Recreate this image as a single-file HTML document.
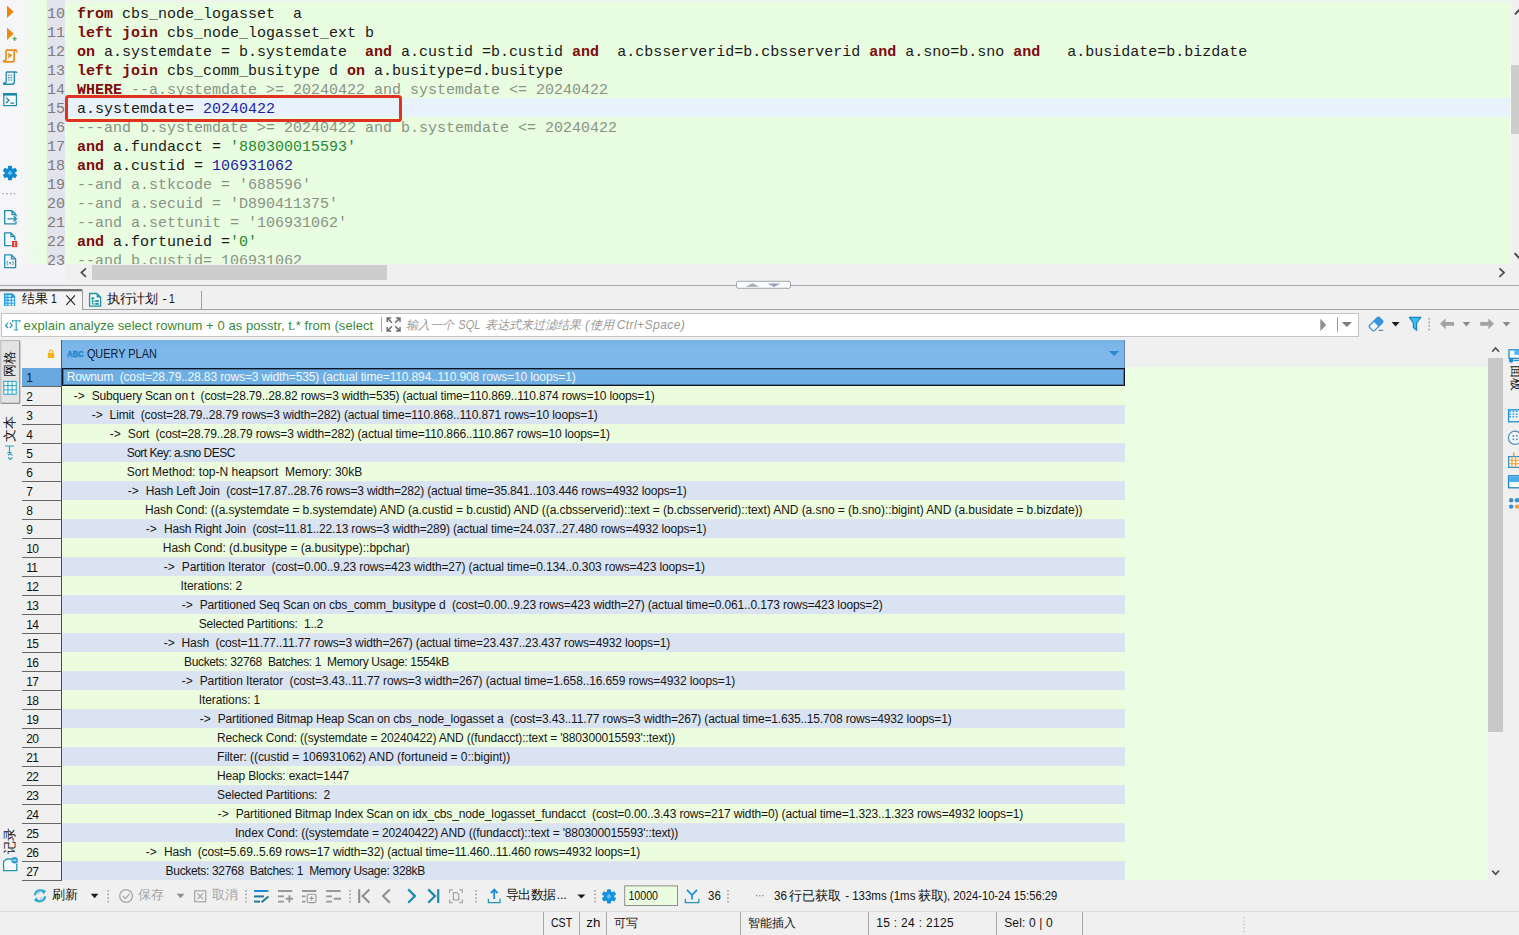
<!DOCTYPE html>
<html lang="zh">
<head>
<meta charset="utf-8">
<title>DBeaver</title>
<style>
*{box-sizing:border-box;margin:0;padding:0}
html,body{width:1519px;height:935px;overflow:hidden;background:#f0f0f0;font-family:"Liberation Sans",sans-serif;font-size:12px;color:#000}
.abs{position:absolute}
#page{position:relative;width:1519px;height:935px;overflow:hidden;background:#f0f0f0}
/* ---------- editor ---------- */
#ltool2{left:0;top:264px;width:77px;height:18px;background:#f4f4f7}
#ltool{left:0;top:0;width:47px;height:264px;background:linear-gradient(90deg,#f6f5f8 0,#f6f6f8 22px,#ecfbe6 34px,#e9fde1 47px)}
#editor{left:47px;top:3px;width:1463px;height:261px;background:#e9fde1;overflow:hidden}
#edtop{left:22px;top:0;width:1497px;height:3px;background:#eef5ec}
#gutter{left:47px;top:0;width:18px;height:264px;background:#e2e3ec}
#curline{left:65px;top:98px;width:1445px;height:19px;background:#e8f2fd}
.ln,.cl{position:absolute;height:19px;line-height:19px;font-family:"Liberation Mono",monospace;font-size:15px;white-space:pre}
.ln{left:40px;width:25px;text-align:right;color:#7d7d7d}
.cl{left:77px;color:#1a1a1a}
.cl b{color:#7d0a0a;font-weight:bold}
.cl i{color:#889386;font-style:normal}
.cl u{color:#1c1ca8;text-decoration:none}
.cl s{color:#1f8a2f;text-decoration:none}
#redbox{left:65px;top:95px;width:337px;height:27px;border:3px solid #e0321f;border-radius:3.5px}
#vsb{left:1510px;top:0px;width:9px;height:264px;background:#f0f0f0;border-left:1px solid #f7fbf5}
#vsb .th{position:absolute;left:0;top:65px;width:9px;height:69px;background:#cdcdcd}
#hsb{left:65px;top:264px;width:1454px;height:18px;background:#f0f0f0}
#hsb .th{position:absolute;left:27px;top:1px;width:295px;height:15px;background:#cdcdcd}
/* ---------- sash / tabs ---------- */
#sash{left:0;top:285px;width:1519px;height:1px;background:#a3abb5}
#tabs{left:0;top:289px;width:1519px;height:21px;border-bottom:1px solid #a0a0a0;background:#f0f0f0}
#tab1{left:0;top:289px;width:83px;height:21px;background:#f4f4f6;border-top:2px solid #6e6e6e;border-right:1px solid #9a9a9a;border-top-right-radius:2px;box-shadow:inset 0 1px 0 rgba(110,110,110,.35)}
#tab2{left:83px;top:291px;width:119px;height:18px;border-right:1px solid #a0a0a0}
.tabtx{position:absolute;font-size:13px;line-height:16px;white-space:pre;color:#111}
/* ---------- filter ---------- */
#filter{left:1px;top:313px;width:1358px;height:24px;background:#fff;border:1px solid #c4c4c4}
#ftxt{left:22px;top:318px;font-size:13px;line-height:16px;color:#3a8a3a;white-space:pre}
.fph{top:317px;font-size:12.1px;line-height:16px;color:#9a9a9a;font-style:italic;white-space:pre}
/* ---------- grid ---------- */
#gbg{left:22px;top:367px;width:1466px;height:513px;background:#ebfde3}
#gcol{left:62px;top:367px;width:1063px;height:513px;background:#ecfde0}
#ghdr{left:61px;top:340px;width:1064px;height:28px;background:linear-gradient(#77b2e7,#7eb7ea 30%,#7db6e9);border-left:1px solid #3f5f80;border-right:1px solid #5f88b4}
#ghdrt{left:87px;top:346px;font-size:12px;line-height:16px;color:#0d1b33;white-space:pre}
.r{position:absolute;left:62px;width:1063px;height:19px;overflow:hidden}
.r.o{background:linear-gradient(#e0e9f0 0,#dae3f1 1px)}
.r.e{background:#ecfddf}
.r.sel{background:#6daee4;border:1px solid #0c1622;box-shadow:inset 0 0 0 1px rgba(30,50,80,.45);color:#fff;margin-top:1px;height:18px}
.r.sel .t{top:0px;margin-left:-1px;color:#f4f8fc}
.t{position:absolute;top:2px;line-height:17px;height:17px;font-size:12px;white-space:pre;color:#161616}
#ov text{font-family:"Liberation Sans",sans-serif;white-space:pre}
#gtxt text{font-family:"Liberation Sans",sans-serif;font-size:12px;fill:#161616;white-space:pre}
#gtxt text.w{fill:#f4f8fc}
.rh{position:absolute;left:22px;width:40px;height:19px;background:#f0f0f0;border-bottom:1px solid #666;border-right:1px solid #4a4a4a;padding-left:4.2px;padding-top:2px;font-size:12px;line-height:17px;color:#111;letter-spacing:-0.7px}
.rh.hsel{background:#68a7e0;color:#0d1b33}
#rhh{left:22px;top:340px;width:40px;height:28px;background:#f3f3f3;border-right:1px solid #4a5a6a}
#gvsb{left:1488px;top:340px;width:15px;height:541px;background:#f0f0f0}
#gvsb .th{position:absolute;left:0;top:18px;width:15px;height:374px;background:#c8c8c8}
#lvt{left:0;top:340px;width:22px;height:541px;background:#f0f0f0}
#rpanel{left:1503px;top:340px;width:16px;height:571px;background:#f0f0f0}
.vtx{transform:rotate(-90deg);transform-origin:0 0;font-size:12.5px;line-height:14px;height:14px;color:#111;white-space:nowrap}
.vtx2{transform:rotate(90deg);transform-origin:0 0;font-size:12.5px;line-height:14px;height:14px;color:#111;white-space:nowrap}
/* ---------- bottom ---------- */
#btool{left:0;top:881px;width:1519px;height:30px;background:#f0f0f0}
#bline{left:0;top:911px;width:1519px;height:1px;background:#dcdcdc}
.bt{position:absolute;font-size:13px;line-height:16px;white-space:pre}
.sm{top:888px;font-size:12.4px;color:#111}
.sep{position:absolute;width:1px;background:#a8a8a8}
.st{position:absolute;top:915px;font-size:12px;line-height:16px;white-space:pre;color:#111}
</style>
</head>
<body>
<div id="page">

<!-- editor -->
<div class="abs" id="edtop"></div>
<div class="abs" id="ltool"></div>
<div class="abs" id="ltool2"></div>
<div class="abs" id="editor"></div>
<div class="abs" id="gutter"></div>
<div class="abs" id="curline"></div>
<div class="ln" style="top:5px">10</div><div class="cl" style="top:5px"><b>from</b> cbs_node_logasset  a</div>
<div class="ln" style="top:24px">11</div><div class="cl" style="top:24px"><b>left</b> <b>join</b> cbs_node_logasset_ext b</div>
<div class="ln" style="top:43px">12</div><div class="cl" style="top:43px"><b>on</b> a.systemdate = b.systemdate  <b>and</b> a.custid =b.custid <b>and</b>  a.cbsserverid=b.cbsserverid <b>and</b> a.sno=b.sno <b>and</b>   a.busidate=b.bizdate</div>
<div class="ln" style="top:62px">13</div><div class="cl" style="top:62px"><b>left</b> <b>join</b> cbs_comm_busitype d <b>on</b> a.busitype=d.busitype</div>
<div class="ln" style="top:81px">14</div><div class="cl" style="top:81px"><b>WHERE</b> <i>--a.systemdate &gt;= 20240422 and systemdate &lt;= 20240422</i></div>
<div class="ln" style="top:100px">15</div><div class="cl" style="top:100px">a.systemdate= <u>20240422</u></div>
<div class="ln" style="top:119px">16</div><div class="cl" style="top:119px"><i>---and b.systemdate &gt;= 20240422 and b.systemdate &lt;= 20240422</i></div>
<div class="ln" style="top:138px">17</div><div class="cl" style="top:138px"><b>and</b> a.fundacct = <s>'880300015593'</s></div>
<div class="ln" style="top:157px">18</div><div class="cl" style="top:157px"><b>and</b> a.custid = <u>106931062</u></div>
<div class="ln" style="top:176px">19</div><div class="cl" style="top:176px"><i>--and a.stkcode = '688596'</i></div>
<div class="ln" style="top:195px">20</div><div class="cl" style="top:195px"><i>--and a.secuid = 'D890411375'</i></div>
<div class="ln" style="top:214px">21</div><div class="cl" style="top:214px"><i>--and a.settunit = '106931062'</i></div>
<div class="ln" style="top:233px">22</div><div class="cl" style="top:233px"><b>and</b> a.fortuneid =<s>'0'</s></div>
<div class="ln" style="top:252px">23</div><div class="cl" style="top:252px"><i>--and b.custid= 106931062</i></div>
<div class="abs" id="redbox"></div>
<div class="abs" id="vsb"><div class="th"></div></div>
<div class="abs" id="hsb"><div class="th"></div></div>
<svg class="abs" style="left:0;top:0" width="22" height="282" viewBox="0 0 22 282">
 <!-- run -->
 <path d="M7 5.5 L13.6 11.8 L7 18.1 Z" fill="#f08305"/>
 <!-- run new tab -->
 <path d="M7 27.6 L13.6 33.8 L7 40 Z" fill="#ee8a10"/>
 <path d="M12.6 38.8 H16.8 M14.7 36.7 V40.9" stroke="#3f9a48" stroke-width="1.1" fill="none"/>
 <!-- run script -->
 <path d="M6 50.2 H15.6 Q16.6 50.2 16.6 51.4 V52.6 M14.2 50.2 V59.8 M6 50.2 V60.6 M3.4 61.9 H11.6 Q14.2 61.9 14.2 59.4 M3.4 61.9 Q3.4 60.4 5 60.4 H6" stroke="#e8901c" stroke-width="1.7" fill="none"/>
 <path d="M8.3 52.6 L12.3 55.6 L8.3 58.6 Z" fill="#e8901c"/>
 <!-- script doc -->
 <path d="M6.2 72 H15.8 Q16.8 72 16.8 73.1 M14.4 72 V82 M6.2 72 V82.6 M3.4 84.3 H11.8 Q14.4 84.3 14.4 81.8 M3.4 84.3 Q3.4 82.8 5 82.8 H6.2" stroke="#2a8db8" stroke-width="1.4" fill="none"/>
 <path d="M8 75.2 H12.6 M8 77.6 H12.6 M8 80 H12.6" stroke="#2a8db8" stroke-width="1.1" stroke-dasharray="1.6 1" fill="none"/>
 <!-- console -->
 <rect x="3.8" y="93.6" width="12.6" height="12" fill="#f7fbfd" stroke="#1f8aae" stroke-width="1.2"/>
 <rect x="3.2" y="93" width="13.8" height="2.6" fill="#1f8aae"/>
 <path d="M6 97.6 L9 100.3 L6 103 M10.4 103.2 H14" stroke="#1f7fa6" stroke-width="1.2" fill="none"/>
 <!-- gear -->
 <g transform="translate(10 173)">
  <circle r="5.3" fill="#0f88cf"/>
  <g fill="#0f88cf">
   <rect x="-2" y="-7.3" width="4" height="14.6" rx="0.8"/>
   <rect x="-2" y="-7.3" width="4" height="14.6" rx="0.8" transform="rotate(60)"/>
   <rect x="-2" y="-7.3" width="4" height="14.6" rx="0.8" transform="rotate(120)"/>
  </g>
  <path d="M0 -2.6 L2.6 0 L0 2.6 L-2.6 0 Z" fill="#62c1f2"/>
 </g>
 <!-- dots -->
 <g fill="#a4a4a4"><rect x="2.4" y="193" width="1.4" height="1.4"/><rect x="6.2" y="193" width="1.4" height="1.4"/><rect x="10" y="193" width="1.4" height="1.4"/><rect x="13.8" y="193" width="1.4" height="1.4"/></g>
 <!-- doc arrow -->
 <path d="M4.7 210.7 H12 L16 214.7 V223.8 H4.7 Z" fill="#f9fcfe" stroke="none"/>
 <path d="M16 216.4 V214.7 L12 210.7 H4.7 V223.8 H16 V221.2 M12 210.7 V214.7 H16" stroke="#1f8aae" stroke-width="1.3" fill="none" stroke-linejoin="round"/>
 <path d="M7.4 218.8 H16.4 M13.6 216.2 L16.4 218.8 L13.6 221.4" stroke="#1f8aae" stroke-width="1.3" fill="none"/>
 <!-- doc red -->
 <path d="M4.7 232.9 H11 L14.8 236.7 V245.6 H4.7 Z" fill="#f9fcfe" stroke="none"/>
 <path d="M14.8 240.2 V236.7 L11 232.9 H4.7 V245.6 H11.4 M11 232.9 V236.7 H14.8" stroke="#1f8aae" stroke-width="1.3" fill="none" stroke-linejoin="round"/>
 <rect x="12" y="241" width="5.2" height="6.2" fill="#e0392e"/>
 <rect x="14.1" y="242.2" width="1.1" height="2.4" fill="#fff"/><rect x="14.1" y="245.2" width="1.1" height="1.1" fill="#fff"/>
 <!-- doc var -->
 <path d="M4.7 254.9 H11.6 L15.6 258.9 V267.6 H4.7 Z M11.6 254.9 V258.9 H15.6" stroke="#2a8db8" stroke-width="1.3" fill="#eef7fb" stroke-linejoin="round"/>
 <path d="M7.6 261 Q6.4 263 7.6 265.2 M12.8 261 Q14 263 12.8 265.2 M9.2 262 L11.2 264.4 M11.2 262 L9.2 264.4" stroke="#3b97bf" stroke-width="0.9" fill="none"/>
</svg>

<svg class="abs" style="left:65px;top:0" width="1454" height="283" viewBox="65 0 1454 283">
 <path d="M86 268.4 L81.4 272.6 L86 276.8" stroke="#4a4a4a" stroke-width="1.7" fill="none"/>
 <path d="M1499.4 268.4 L1504 272.6 L1499.4 276.8" stroke="#4a4a4a" stroke-width="1.7" fill="none"/>
 <path d="M1515 14.4 L1520 9.2" stroke="#454545" stroke-width="1.9" fill="none"/>
 <path d="M1514.6 253.2 L1520 258.8" stroke="#454545" stroke-width="1.9" fill="none"/>
</svg>

<!-- sash + tabs -->
<div class="abs" id="sash"></div>
<div class="abs" id="tabs"></div>
<div class="abs" id="tab1"></div>
<div class="abs" id="tab2"></div>
<div class="tabtx" style="left:22px;top:291px">结果</div>
<div class="tabtx" style="left:50.6px;top:291px;transform:scaleX(.8);transform-origin:0 0">1</div>
<div class="tabtx" style="left:107px;top:291px;letter-spacing:-0.3px">执行计划</div>
<div class="tabtx" style="left:162.4px;top:291px">-</div>
<div class="tabtx" style="left:169.2px;top:291px;transform:scaleX(.8);transform-origin:0 0">1</div>
<svg class="abs" style="left:730px;top:279px" width="70" height="12" viewBox="730 279 70 12">
 <rect x="736.5" y="281.3" width="54" height="7" rx="1.5" fill="#fafbfd" stroke="#8f9296" stroke-width="0.8"/>
 <path d="M746 286.7 L752.5 283.2 L759 286.7 Z" fill="#a3aab2"/>
 <path d="M767.6 283.4 L780.4 283.4 L774 286.9 Z" fill="#9ba0bd"/>
</svg>
<svg class="abs" style="left:0;top:289px" width="210" height="21" viewBox="0 289 210 21">
 <!-- grid icon tab1 -->
 <path d="M4 293.2 H12.4 L15.2 296 V306 H4 Z" fill="#2a9fe5"/>
 <rect x="5.2" y="295" width="2.3" height="1.8" fill="#8fd6f8"/><rect x="8.5" y="295" width="2.3" height="1.8" fill="#f2fbff"/><rect x="5.2" y="297.9" width="2.3" height="1.8" fill="#8fd6f8"/><rect x="8.5" y="297.9" width="2.3" height="1.8" fill="#f2fbff"/><rect x="11.8" y="297.9" width="2.3" height="1.8" fill="#f2fbff"/><rect x="5.2" y="300.8" width="2.3" height="1.8" fill="#8fd6f8"/><rect x="8.5" y="300.8" width="2.3" height="1.8" fill="#f2fbff"/><rect x="11.8" y="300.8" width="2.3" height="1.8" fill="#f2fbff"/><rect x="5.2" y="303.7" width="2.3" height="1.8" fill="#8fd6f8"/><rect x="8.5" y="303.7" width="2.3" height="1.8" fill="#f2fbff"/><rect x="11.8" y="303.7" width="2.3" height="1.8" fill="#f2fbff"/>
 <!-- close x -->
 <path d="M66.3 295.3 L75 304.8 M75 295.3 L66.3 304.8" stroke="#222" stroke-width="1.1"/>
 <!-- plan icon tab2 -->
 <path d="M89.6 293.5 H96.8 L100.6 297.3 V306.2 H89.6 Z" fill="#f4fbfd" stroke="#1f94a4" stroke-width="1.3" stroke-linejoin="round"/>
 <path d="M96.6 293.6 V297.5 H100.5 Z" fill="#1f94a4"/>
 <rect x="91.4" y="297.4" width="3" height="1.7" fill="#1f94a4"/>
 <path d="M92.4 299 V304 H94.6 M92.4 301.2 H94.6" stroke="#1f94a4" stroke-width="1" fill="none"/>
 <rect x="95.2" y="300.2" width="3.6" height="1.8" fill="#1f94a4"/>
 <rect x="95.2" y="303" width="3.6" height="1.8" fill="#1f94a4"/>
</svg>


<!-- filter -->
<div class="abs" id="filter"></div>
<div class="abs fph" style="left:405.5px">输入一个</div>
<div class="abs fph" style="left:484.5px">表达式来过滤结果</div>
<div class="abs fph" style="left:585px">(</div>
<div class="abs fph" style="left:589.5px">使用</div>
<svg class="abs" style="left:0;top:312px" width="1519" height="26" viewBox="0 312 1519 26">
 <!-- <>T icon -->
 <path d="M8 322.8 L5.6 325.4 L8 328 M9.8 322.8 L12.2 325.4 L9.8 328" stroke="#2496b4" stroke-width="1.2" fill="none"/>
 <path d="M12.4 322.2 V320.7 H20 V322.2 M16.2 320.7 V330" stroke="#2b9ab6" stroke-width="1.1" fill="none"/>
 <path d="M14.2 330 H18.2" stroke="#2b9ab6" stroke-width="1"/>
 <!-- separator -->
 <rect x="381" y="317" width="1" height="15" fill="#a6a6a6"/>
 <!-- expand icon -->
 <g stroke="#6e6e6e" stroke-width="1.5" fill="none">
  <path d="M387.2 322 V318 H391.2 M387.6 318.4 L392 322.8"/>
  <path d="M400 322 V318 H396 M399.6 318.4 L395.2 322.8"/>
  <path d="M387.2 327 V331 H391.2 M387.6 330.6 L392 326.2"/>
  <path d="M400 327 V331 H396 M399.6 330.6 L395.2 326.2"/>
 </g>
 <!-- run filter / dropdown -->
 <path d="M1320.3 318.8 L1326.3 324.9 L1320.3 331 Z" fill="#8f8f8f"/>
 <rect x="1337" y="317.4" width="1" height="14.4" fill="#9a9a9a"/>
 <path d="M1341.8 322 H1352 L1346.9 327 Z" fill="#7d7d7d"/>
 <!-- eraser -->
 <g transform="translate(1376 324) rotate(-45)">
  <rect x="-7" y="-3.6" width="14" height="7.2" rx="1.6" fill="#f2f8fd" stroke="#3a8fd6" stroke-width="1.3"/>
  <path d="M0 -3.6 H5.4 Q7 -3.6 7 -2 V2 Q7 3.6 5.4 3.6 H0 Z" fill="#3295e0"/>
 </g>
 <rect x="1378.6" y="329.8" width="4.6" height="1.1" fill="#4a7aa8"/>
 <path d="M1391.6 322 H1399.6 L1395.6 326.4 Z" fill="#1c1c1c"/>
 <!-- funnel -->
 <path d="M1409.4 317.4 H1420.8 L1416.6 323 V330.4 L1413.4 327.6 V323 Z" fill="#3dbdf0" stroke="#1a86b8" stroke-width="1.2" stroke-linejoin="round"/>
 <!-- dotted separator -->
 <g fill="#a0a0a0"><rect x="1428.4" y="318" width="1.6" height="1.6"/><rect x="1428.4" y="321.6" width="1.6" height="1.6"/><rect x="1428.4" y="325.2" width="1.6" height="1.6"/><rect x="1428.4" y="328.8" width="1.6" height="1.6"/></g>
 <!-- back / forward -->
 <path d="M1440 323.8 L1445.6 318.4 V321.9 H1454 V325.7 H1445.6 V329.2 Z" fill="#a2a2a2"/>
 <path d="M1462.6 322 H1470.2 L1466.4 326.4 Z" fill="#8a8a8a"/>
 <path d="M1494 323.8 L1488.4 318.4 V321.9 H1480.2 V325.7 H1488.4 V329.2 Z" fill="#a2a2a2"/>
 <path d="M1502.6 322 H1510.4 L1506.5 326.4 Z" fill="#8a8a8a"/>
</svg>


<!-- grid -->
<div class="abs" id="gbg"></div>
<div class="abs" id="gcol"></div>
<div class="abs" id="rhh"></div>
<div class="abs" id="ghdr"></div>
<div class="r sel" style="top:367px"></div>
<div class="rh hsel" style="top:368px">1</div>
<div class="r e" style="top:386px"></div>
<div class="rh" style="top:387px">2</div>
<div class="r o" style="top:405px"></div>
<div class="rh" style="top:406px">3</div>
<div class="r e" style="top:424px"></div>
<div class="rh" style="top:425px">4</div>
<div class="r o" style="top:443px"></div>
<div class="rh" style="top:444px">5</div>
<div class="r e" style="top:462px"></div>
<div class="rh" style="top:463px">6</div>
<div class="r o" style="top:481px"></div>
<div class="rh" style="top:482px">7</div>
<div class="r e" style="top:500px"></div>
<div class="rh" style="top:501px">8</div>
<div class="r o" style="top:519px"></div>
<div class="rh" style="top:520px">9</div>
<div class="r e" style="top:538px"></div>
<div class="rh" style="top:539px">10</div>
<div class="r o" style="top:557px"></div>
<div class="rh" style="top:558px">11</div>
<div class="r e" style="top:576px"></div>
<div class="rh" style="top:577px">12</div>
<div class="r o" style="top:595px"></div>
<div class="rh" style="top:596px">13</div>
<div class="r e" style="top:614px"></div>
<div class="rh" style="top:615px">14</div>
<div class="r o" style="top:633px"></div>
<div class="rh" style="top:634px">15</div>
<div class="r e" style="top:652px"></div>
<div class="rh" style="top:653px">16</div>
<div class="r o" style="top:671px"></div>
<div class="rh" style="top:672px">17</div>
<div class="r e" style="top:690px"></div>
<div class="rh" style="top:691px">18</div>
<div class="r o" style="top:709px"></div>
<div class="rh" style="top:710px">19</div>
<div class="r e" style="top:728px"></div>
<div class="rh" style="top:729px">20</div>
<div class="r o" style="top:747px"></div>
<div class="rh" style="top:748px">21</div>
<div class="r e" style="top:766px"></div>
<div class="rh" style="top:767px">22</div>
<div class="r o" style="top:785px"></div>
<div class="rh" style="top:786px">23</div>
<div class="r e" style="top:804px"></div>
<div class="rh" style="top:805px">24</div>
<div class="r o" style="top:823px"></div>
<div class="rh" style="top:824px">25</div>
<div class="r e" style="top:842px"></div>
<div class="rh" style="top:843px">26</div>
<div class="r o" style="top:861px"></div>
<div class="rh" style="top:862px">27</div>
<svg class="abs" id="gtxt" style="left:62px;top:367px" width="1062" height="513" viewBox="62 367 1062 513"><text x="66.7" y="380.6" textLength="509.0" lengthAdjust="spacing" xml:space="preserve" class="w">Rownum  (cost=28.79..28.83 rows=3 width=535) (actual time=110.894..110.908 rows=10 loops=1)</text>
<text x="73.7" y="399.6">-&gt;</text>
<text x="91.7" y="399.6" textLength="563.0" lengthAdjust="spacing" xml:space="preserve">Subquery Scan on t  (cost=28.79..28.82 rows=3 width=535) (actual time=110.869..110.874 rows=10 loops=1)</text>
<text x="91.7" y="418.6">-&gt;</text>
<text x="109.6" y="418.6" textLength="488.2" lengthAdjust="spacing" xml:space="preserve">Limit  (cost=28.79..28.79 rows=3 width=282) (actual time=110.868..110.871 rows=10 loops=1)</text>
<text x="109.7" y="437.6">-&gt;</text>
<text x="127.8" y="437.6" textLength="482.1" lengthAdjust="spacing" xml:space="preserve">Sort  (cost=28.79..28.79 rows=3 width=282) (actual time=110.866..110.867 rows=10 loops=1)</text>
<text x="126.7" y="456.6" textLength="108.6" lengthAdjust="spacing" xml:space="preserve">Sort Key: a.sno DESC</text>
<text x="126.7" y="475.6" textLength="235.6" lengthAdjust="spacing" xml:space="preserve">Sort Method: top-N heapsort  Memory: 30kB</text>
<text x="127.7" y="494.6">-&gt;</text>
<text x="145.7" y="494.6" textLength="541.1" lengthAdjust="spacing" xml:space="preserve">Hash Left Join  (cost=17.87..28.76 rows=3 width=282) (actual time=35.841..103.446 rows=4932 loops=1)</text>
<text x="144.9" y="513.6" textLength="937.7" lengthAdjust="spacing" xml:space="preserve">Hash Cond: ((a.systemdate = b.systemdate) AND (a.custid = b.custid) AND ((a.cbsserverid)::text = (b.cbsserverid)::text) AND (a.sno = (b.sno)::bigint) AND (a.busidate = b.bizdate))</text>
<text x="145.7" y="532.6">-&gt;</text>
<text x="163.9" y="532.6" textLength="542.7" lengthAdjust="spacing" xml:space="preserve">Hash Right Join  (cost=11.81..22.13 rows=3 width=289) (actual time=24.037..27.480 rows=4932 loops=1)</text>
<text x="162.8" y="551.6" textLength="247.0" lengthAdjust="spacing" xml:space="preserve">Hash Cond: (d.busitype = (a.busitype)::bpchar)</text>
<text x="163.7" y="570.6">-&gt;</text>
<text x="181.8" y="570.6" textLength="523.2" lengthAdjust="spacing" xml:space="preserve">Partition Iterator  (cost=0.00..9.23 rows=423 width=27) (actual time=0.134..0.303 rows=423 loops=1)</text>
<text x="180.5" y="589.6" textLength="61.8" lengthAdjust="spacing" xml:space="preserve">Iterations: 2</text>
<text x="181.7" y="608.6">-&gt;</text>
<text x="199.7" y="608.6" textLength="683.0" lengthAdjust="spacing" xml:space="preserve">Partitioned Seq Scan on cbs_comm_busitype d  (cost=0.00..9.23 rows=423 width=27) (actual time=0.061..0.173 rows=423 loops=2)</text>
<text x="198.8" y="627.6" textLength="124.5" lengthAdjust="spacing" xml:space="preserve">Selected Partitions:  1..2</text>
<text x="163.7" y="646.6">-&gt;</text>
<text x="181.6" y="646.6" textLength="488.7" lengthAdjust="spacing" xml:space="preserve">Hash  (cost=11.77..11.77 rows=3 width=267) (actual time=23.437..23.437 rows=4932 loops=1)</text>
<text x="184.0" y="665.6" textLength="265.3" lengthAdjust="spacing" xml:space="preserve">Buckets: 32768  Batches: 1  Memory Usage: 1554kB</text>
<text x="181.7" y="684.6">-&gt;</text>
<text x="199.7" y="684.6" textLength="535.6" lengthAdjust="spacing" xml:space="preserve">Partition Iterator  (cost=3.43..11.77 rows=3 width=267) (actual time=1.658..16.659 rows=4932 loops=1)</text>
<text x="198.8" y="703.6" textLength="61.5" lengthAdjust="spacing" xml:space="preserve">Iterations: 1</text>
<text x="199.7" y="722.6">-&gt;</text>
<text x="217.7" y="722.6" textLength="734.0" lengthAdjust="spacing" xml:space="preserve">Partitioned Bitmap Heap Scan on cbs_node_logasset a  (cost=3.43..11.77 rows=3 width=267) (actual time=1.635..15.708 rows=4932 loops=1)</text>
<text x="217.1" y="741.6" textLength="458.2" lengthAdjust="spacing" xml:space="preserve">Recheck Cond: ((systemdate = 20240422) AND ((fundacct)::text = &#x27;880300015593&#x27;::text))</text>
<text x="217.1" y="760.6" textLength="293.2" lengthAdjust="spacing" xml:space="preserve">Filter: ((custid = 106931062) AND (fortuneid = 0::bigint))</text>
<text x="217.1" y="779.6" textLength="132.2" lengthAdjust="spacing" xml:space="preserve">Heap Blocks: exact=1447</text>
<text x="217.1" y="798.6" textLength="113.2" lengthAdjust="spacing" xml:space="preserve">Selected Partitions:  2</text>
<text x="217.7" y="817.6">-&gt;</text>
<text x="235.7" y="817.6" textLength="787.6" lengthAdjust="spacing" xml:space="preserve">Partitioned Bitmap Index Scan on idx_cbs_node_logasset_fundacct  (cost=0.00..3.43 rows=217 width=0) (actual time=1.323..1.323 rows=4932 loops=1)</text>
<text x="234.9" y="836.6" textLength="443.4" lengthAdjust="spacing" xml:space="preserve">Index Cond: ((systemdate = 20240422) AND ((fundacct)::text = &#x27;880300015593&#x27;::text))</text>
<text x="145.7" y="855.6">-&gt;</text>
<text x="163.9" y="855.6" textLength="476.4" lengthAdjust="spacing" xml:space="preserve">Hash  (cost=5.69..5.69 rows=17 width=32) (actual time=11.460..11.460 rows=4932 loops=1)</text>
<text x="165.6" y="874.6" textLength="259.7" lengthAdjust="spacing" xml:space="preserve">Buckets: 32768  Batches: 1  Memory Usage: 328kB</text></svg>
<div class="abs" id="gvsb"><div class="th"></div></div>
<div class="abs" id="lvt"></div>
<div class="abs" id="rpanel"></div>
<svg class="abs" style="left:0;top:338px" width="1519" height="574" viewBox="0 338 1519 574">
 <!-- left vertical tabs -->
 <rect x="0.8" y="340.6" width="18.8" height="62.6" fill="#e3e3e3" stroke="#b4b4b4" stroke-width="1"/>
 <path d="M1 403.4 H19.8 V341" stroke="#8f8f8f" stroke-width="1" fill="none"/>
 <g stroke="#2aa3c6" stroke-width="1" fill="#f6fcfe">
  <rect x="3.8" y="381.4" width="12.4" height="12.8"/>
  <path d="M7.9 381.4 V394.2 M12.1 381.4 V394.2 M3.8 385.6 H16.2 M3.8 389.9 H16.2" fill="none"/>
 </g>
 <!-- text icon -->
 <path d="M5 446 H14 M9.5 446 V452.6 M7.4 452.6 H11.6" stroke="#2aa3c6" stroke-width="1.2" fill="none"/>
 <path d="M8 455.4 L10.2 453.6 L12.4 455.4 M8 457.4 L10.2 459.4 L12.4 457.4" stroke="#2496b4" stroke-width="1.1" fill="none"/>
 <!-- record icon -->
 <path d="M3.6 870.6 V861.6 L6.6 859 H16.8 V870.6 Z" fill="#f7fcfd"/>
 <path d="M12 859 H6.6 L3.6 861.6 V870.6 H16.8 V863.4" stroke="#2496a8" stroke-width="1.3" fill="none"/>
 <circle cx="14.6" cy="860.2" r="3.3" fill="#2f9de0"/>
 <rect x="12.8" y="859.7" width="3.6" height="1" fill="#e8f5fd"/>
 <!-- lock -->
 <rect x="47.8" y="353" width="6.4" height="5" rx="0.6" fill="#f5b60d"/>
 <path d="M49.2 353.2 V351.8 Q49.2 350.2 51 350.2 Q52.8 350.2 52.8 351.8 V353.2" stroke="#f3bb2a" stroke-width="1.2" fill="none"/>
 <!-- header sort triangle -->
 <path d="M1108.8 351 H1119.4 L1114.1 356 Z" fill="#2b8bd0"/>
 <!-- grid scrollbar arrows -->
 <path d="M1492.2 351.8 L1495.6 348 L1499 351.8" stroke="#4f4f4f" stroke-width="1.6" fill="none"/>
 <path d="M1492.2 870.6 L1495.6 874.4 L1499 870.6" stroke="#4f4f4f" stroke-width="1.6" fill="none"/>
 <!-- right panel icons (clipped by page edge) -->
 <g>
  <rect x="1509" y="349.8" width="12" height="8.6" fill="#f4fbfe" stroke="#1f8ed6" stroke-width="1.3"/>
  <rect x="1514.4" y="349.8" width="6" height="5" fill="#4fb4f0"/>
  <circle cx="1511.2" cy="360.4" r="2.3" fill="#1f8ed6"/>
  <rect x="1514" y="359.8" width="6" height="1.3" fill="#1f8ed6"/>
  <!-- checker -->
  <rect x="1508.6" y="409.8" width="12" height="12" fill="#eaf6fd" stroke="#1f8ed6" stroke-width="1.3"/>
  <path d="M1509.4 411.6 H1520 M1509.4 414.2 H1520 M1509.4 416.8 H1520" stroke="#3aa0e0" stroke-width="1.5" stroke-dasharray="1.6 1.6"/>
  <!-- circle -->
  <circle cx="1515" cy="437.8" r="6.6" fill="#f3f8fc" stroke="#4a90c8" stroke-width="1.2"/>
  <g fill="#3a86c0"><rect x="1512.6" y="435" width="1.6" height="1.6"/><rect x="1516" y="435" width="1.6" height="1.6"/><rect x="1512.6" y="438.6" width="1.6" height="1.6"/><rect x="1516" y="438.6" width="1.6" height="1.6"/></g>
  <!-- orange grid -->
  <rect x="1508.6" y="456.6" width="12" height="10.8" fill="#fdf3e0" stroke="#2c8fd0" stroke-width="1.2"/>
  <path d="M1512 456.6 V467.4 M1515.6 456.6 V467.4 M1508.6 460.2 H1520 M1508.6 463.8 H1520" stroke="#e9a23a" stroke-width="1.1"/>
  <path d="M1513.8 452.4 V456.4" stroke="#e9962a" stroke-width="1.4"/>
  <!-- panel -->
  <rect x="1508.6" y="475.8" width="12" height="12" fill="#f6fbfe" stroke="#1f86c8" stroke-width="1.3"/>
  <rect x="1509.2" y="476.4" width="11" height="5.6" fill="#49aeea"/>
  <!-- small circles -->
  <circle cx="1511.2" cy="500.2" r="2.2" fill="#3a8fd0"/><circle cx="1517" cy="500.2" r="2.2" fill="#3a8fd0"/>
  <circle cx="1511.2" cy="506.6" r="2.2" fill="#3a8fd0"/><circle cx="1517" cy="506.6" r="2.2" fill="#eea23a"/>
  <!-- bottom-right icon -->
  <rect x="1508.4" y="894" width="3.6" height="14.2" rx="1" fill="#1787d6"/>
  <rect x="1513.4" y="902.6" width="6" height="5.4" fill="#1787d6"/>
  <path d="M1519 897.6 H1514.6 M1516.4 895.6 L1514.4 897.6 L1516.4 899.6" stroke="#1787d6" stroke-width="1.3" fill="none"/>
 </g>
</svg>
<!-- ABC glyph -->
<div class="abs" style="left:67.2px;top:348px;font-size:9.6px;line-height:12px;font-weight:bold;color:#2487d0;-webkit-text-stroke:0.5px #2487d0;transform:scaleX(0.8);transform-origin:0 0">ABC</div>
<!-- rotated labels -->
<div class="abs vtx" style="left:3px;top:377px">网格</div>
<div class="abs vtx" style="left:3px;top:442px">文本</div>
<div class="abs vtx" style="left:3px;top:854px">记录</div>
<div class="abs vtx2" style="left:1523px;top:365px">面板</div>


<!-- bottom -->
<div class="abs" id="btool"></div>
<div class="abs" id="bline"></div>
<svg class="abs" style="left:0;top:882px" width="1519" height="29" viewBox="0 882 1519 29">
 <!-- refresh -->
 <g stroke="#2aa7d8" stroke-width="2" fill="none" stroke-linecap="round">
  <path d="M35 894.6 A5.2 5.2 0 0 1 43.6 891.6"/>
  <path d="M45 897 A5.2 5.2 0 0 1 36.4 900"/>
 </g>
 <path d="M41.6 889 L46.2 891 L43.2 894.6 Z" fill="#2aa7d8"/>
 <path d="M38.4 902.6 L33.8 900.6 L36.8 897 Z" fill="#2aa7d8"/>
 <path d="M37.6 894.2 L40 891.8 M42.4 897.4 L40 899.8" stroke="#7fcdec" stroke-width="1.2"/>
 <path d="M90.8 893.8 H98.4 L94.6 898.2 Z" fill="#1c1c1c"/>
 <g fill="#a2a2a2" transform="translate(108.2 0)"><rect x="-0.8" y="890" width="1.6" height="1.6"/><rect x="-0.8" y="893.6" width="1.6" height="1.6"/><rect x="-0.8" y="897.2" width="1.6" height="1.6"/><rect x="-0.8" y="900.8" width="1.6" height="1.6"/></g>
 <!-- save -->
 <circle cx="126.1" cy="896" r="6.4" fill="none" stroke="#a3a3a3" stroke-width="1.2"/>
 <path d="M122.8 896 L125.4 898.6 L129.6 893.8" stroke="#a3a3a3" stroke-width="1.2" fill="none"/>
 <path d="M176.7 893.8 H184.4 L180.5 898.2 Z" fill="#8c8c8c"/>
 <!-- cancel -->
 <rect x="194.7" y="890.8" width="11" height="11" fill="none" stroke="#a3a3a3" stroke-width="1.2"/>
 <path d="M197.4 893.4 L203 899.2 M203 893.4 L197.4 899.2" stroke="#a3a3a3" stroke-width="1.1"/>
 <g fill="#a2a2a2" transform="translate(246 0)"><rect x="-0.8" y="890" width="1.6" height="1.6"/><rect x="-0.8" y="893.6" width="1.6" height="1.6"/><rect x="-0.8" y="897.2" width="1.6" height="1.6"/><rect x="-0.8" y="900.8" width="1.6" height="1.6"/></g>
 <!-- edit row -->
 <path d="M254 891 H268.4" stroke="#1e8ad8" stroke-width="2"/>
 <path d="M254 896.4 H264" stroke="#21789a" stroke-width="2"/>
 <path d="M254 901.6 H260" stroke="#21789a" stroke-width="2"/>
 <path d="M261.6 902.2 L268.4 896.6" stroke="#21789a" stroke-width="2"/>
 <!-- add row -->
 <g stroke="#979797" stroke-width="1.9" fill="none">
  <path d="M278 891 H292.2 M278 896.4 H284 M278 901.6 H284 M285.8 898.8 H293 M289.4 895.2 V902.6"/>
  <!-- copy row -->
  <path d="M302 891 H316.4 M302 896.4 H305.4 M302 901.6 H305.4"/>
 </g>
 <rect x="307.2" y="894.2" width="8.8" height="8.4" rx="1.6" fill="none" stroke="#9a9a9a" stroke-width="1.1"/>
 <path d="M309.4 898.4 H313.8 M311.6 896.2 V900.6" stroke="#9a9a9a" stroke-width="1.1"/>
 <!-- delete row -->
 <path d="M326.2 891 H340.6 M326.2 896.4 H332 M326.2 901.6 H332 M333.8 898.8 H341" stroke="#979797" stroke-width="1.9" fill="none"/>
 <g fill="#a2a2a2" transform="translate(350.1 0)"><rect x="-0.8" y="890" width="1.6" height="1.6"/><rect x="-0.8" y="893.6" width="1.6" height="1.6"/><rect x="-0.8" y="897.2" width="1.6" height="1.6"/><rect x="-0.8" y="900.8" width="1.6" height="1.6"/></g>
 <!-- nav -->
 <g stroke="#8f8f8f" stroke-width="2.1" fill="none">
  <path d="M359.2 889.2 V903 M369.4 889.4 L362.6 896.1 L369.4 902.8"/>
  <path d="M389.8 889.4 L383 896.1 L389.8 902.8"/>
 </g>
 <g stroke="#1b8bb0" stroke-width="2.2" fill="none">
  <path d="M408.2 889.4 L415 896.1 L408.2 902.8"/>
  <path d="M428.2 889.4 L435 896.1 L428.2 902.8 M438.2 889.2 V903"/>
 </g>
 <!-- count -->
 <g stroke="#a2a2a2" stroke-width="1.2" fill="none">
  <path d="M449.6 893 V889.8 H452.8 M459.2 889.8 H462.4 V893 M449.6 899.4 V902.6 H452.8 M459.2 902.6 H462.4 V899.4"/>
  <path d="M453.4 892.6 H457 L458.8 894.4 V899.8 H453.4 Z"/>
 </g>
 <g fill="#a2a2a2" transform="translate(475.9 0)"><rect x="-0.8" y="890" width="1.6" height="1.6"/><rect x="-0.8" y="893.6" width="1.6" height="1.6"/><rect x="-0.8" y="897.2" width="1.6" height="1.6"/><rect x="-0.8" y="900.8" width="1.6" height="1.6"/></g>
 <!-- export -->
 <path d="M494.2 899 V890 M490.8 893.2 L494.2 889.6 L497.6 893.2" stroke="#1e8ad8" stroke-width="1.8" fill="none"/>
 <path d="M488.4 898.8 V902.6 H500 V898.8" stroke="#2a96b4" stroke-width="1.3" fill="none"/>
 <path d="M577.4 894.4 H585.4 L581.4 898.4 Z" fill="#1c1c1c"/>
 <g fill="#a2a2a2" transform="translate(595 0)"><rect x="-0.8" y="890" width="1.6" height="1.6"/><rect x="-0.8" y="893.6" width="1.6" height="1.6"/><rect x="-0.8" y="897.2" width="1.6" height="1.6"/><rect x="-0.8" y="900.8" width="1.6" height="1.6"/></g>
 <!-- gear -->
 <g transform="translate(609 896.4)">
  <circle r="5.2" fill="#1590dc"/>
  <g fill="#1590dc">
   <rect x="-2" y="-7.2" width="4" height="14.4" rx="0.8"/>
   <rect x="-2" y="-7.2" width="4" height="14.4" rx="0.8" transform="rotate(60)"/>
   <rect x="-2" y="-7.2" width="4" height="14.4" rx="0.8" transform="rotate(120)"/>
  </g>
  <path d="M0 -2.6 L2.6 0 L0 2.6 L-2.6 0 Z" fill="#62c1f2"/>
 </g>
 <!-- fetch size box -->
 <rect x="624.7" y="885.9" width="52.8" height="19.6" fill="#eafde0" stroke="#8e8e8e" stroke-width="1"/>
 <!-- fetch all -->
 <path d="M687 889.8 L692 895 L697 889.8 M692 895 V899.6" stroke="#1e8ad8" stroke-width="1.7" fill="none"/>
 <path d="M685.4 898.8 V902.6 H698.8 V898.8" stroke="#2a96b4" stroke-width="1.3" fill="none"/>
 <g fill="#a2a2a2" transform="translate(728 0)"><rect x="-0.8" y="890" width="1.6" height="1.6"/><rect x="-0.8" y="893.6" width="1.6" height="1.6"/><rect x="-0.8" y="897.2" width="1.6" height="1.6"/><rect x="-0.8" y="900.8" width="1.6" height="1.6"/></g>
 <g fill="#8c8c8c"><rect x="756" y="895" width="1.3" height="1.3"/><rect x="759.2" y="895" width="1.3" height="1.3"/><rect x="762.4" y="895" width="1.3" height="1.3"/></g>
</svg>
<div class="bt" style="left:51.5px;top:887px;color:#111">刷新</div>
<div class="bt" style="left:138px;top:887px;color:#a4a4a4">保存</div>
<div class="bt" style="left:211.5px;top:887px;color:#a4a4a4">取消</div>
<div class="bt" style="left:505.5px;top:887px;color:#111;letter-spacing:-0.4px">导出数据</div>
<div class="bt" style="left:556.6px;top:887px;color:#111;letter-spacing:-0.3px">...</div>
<div class="bt sm" style="left:789px;font-size:12.9px;top:887.5px">行已获取</div>
<div class="bt sm" style="left:918.4px;font-size:12.6px;top:887.5px">获取</div>

<div class="sep" style="left:543px;top:912px;height:23px"></div>
<div class="sep" style="left:579px;top:912px;height:23px"></div>
<div class="sep" style="left:606px;top:912px;height:23px"></div>
<div class="sep" style="left:740px;top:912px;height:23px"></div>
<div class="sep" style="left:868px;top:912px;height:23px"></div>
<div class="sep" style="left:996px;top:912px;height:23px"></div>
<div class="sep" style="left:1082px;top:912px;height:23px"></div>
<div class="st" style="left:614px">可写</div>
<div class="st" style="left:747.5px">智能插入</div>
<svg class="abs" style="left:1240px;top:914px" width="8" height="21" viewBox="0 0 8 21"><g fill="#c4c4c4"><rect x="3.4" y="3" width="1.4" height="1.4"/><rect x="3.4" y="6.4" width="1.4" height="1.4"/><rect x="3.4" y="9.8" width="1.4" height="1.4"/><rect x="3.4" y="13.2" width="1.4" height="1.4"/><rect x="3.4" y="16.6" width="1.4" height="1.4"/></g></svg>

<svg class="abs" id="ov" style="left:0;top:0" width="1519" height="935" viewBox="0 0 1519 935">
<text x="23.6" y="330.3" font-size="13" fill="#3a8a3a" textLength="349.5" lengthAdjust="spacing" xml:space="preserve">explain analyze select rownum + 0 as posstr, t.* from (select</text>
<text x="86.9" y="358.0" font-size="12" fill="#0d1b33" textLength="69.9" lengthAdjust="spacingAndGlyphs" xml:space="preserve">QUERY PLAN</text>
<text x="628.4" y="900.0" font-size="12.5" fill="#111" textLength="29.6" lengthAdjust="spacingAndGlyphs" xml:space="preserve">10000</text>
<text x="708.1" y="900.0" font-size="12.5" fill="#111" textLength="12.7" lengthAdjust="spacingAndGlyphs" xml:space="preserve">36</text>
<text x="550.9" y="927.0" font-size="12" fill="#111" textLength="21.3" lengthAdjust="spacingAndGlyphs" xml:space="preserve">CST</text>
<text x="586.3" y="927.0" font-size="12" fill="#111" textLength="14.1" lengthAdjust="spacingAndGlyphs" xml:space="preserve">zh</text>
<text x="876.2" y="927.0" font-size="12" fill="#111" textLength="77.4" lengthAdjust="spacing" xml:space="preserve">15 : 24 : 2125</text>
<text x="1004.2" y="927.0" font-size="12" fill="#111" textLength="48.6" lengthAdjust="spacing" xml:space="preserve">Sel: 0 | 0</text>
<text x="458.3" y="329.0" font-size="12.1" fill="#9a9a9a" textLength="22.2" lengthAdjust="spacingAndGlyphs" xml:space="preserve" font-style="italic">SQL</text>
<text x="616.7" y="329.0" font-size="12.1" fill="#9a9a9a" textLength="68.2" lengthAdjust="spacing" xml:space="preserve" font-style="italic">Ctrl+Space)</text>
<text x="773.9" y="900.0" font-size="12.4" fill="#111" textLength="13.0" lengthAdjust="spacingAndGlyphs" xml:space="preserve">36</text>
<text x="845.2" y="900.0" font-size="12.4" fill="#111" textLength="70.2" lengthAdjust="spacingAndGlyphs" xml:space="preserve">- 133ms (1ms</text>
<text x="943.4" y="900.0" font-size="12.4" fill="#111" textLength="113.8" lengthAdjust="spacingAndGlyphs" xml:space="preserve">), 2024-10-24 15:56:29</text>
</svg>

</div>
</body>
</html>
